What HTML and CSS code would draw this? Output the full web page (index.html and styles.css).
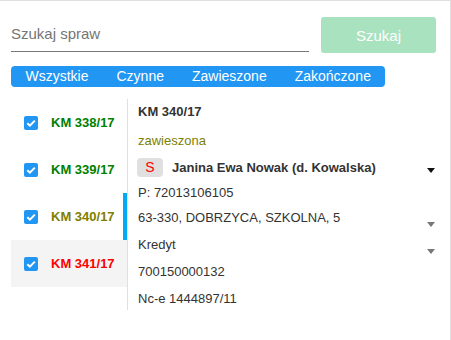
FILE: index.html
```html
<!DOCTYPE html>
<html lang="pl">
<head>
<meta charset="utf-8">
<link rel="stylesheet" href="styles.css">
</head>
<body>
<div class="frame">
  <div class="search-row">
    <div class="search-input">Szukaj spraw</div>
    <button class="search-btn">Szukaj</button>
  </div>
  <div class="tabs">
    <span class="tab">Wszystkie</span>
    <span class="tab">Czynne</span>
    <span class="tab">Zawieszone</span>
    <span class="tab">Zakończone</span>
  </div>
  <div class="main">
    <div class="list">
      <div class="item">
        <svg class="cb" width="14" height="14" viewBox="0 0 14 14"><rect width="14" height="14" rx="2" fill="#2196f3"/><path d="M3.3 7.2 L5.9 9.6 L10.8 4.6" fill="none" stroke="#fff" stroke-width="2"/></svg>
        <span class="label green">KM 338/17</span>
      </div>
      <div class="item">
        <svg class="cb" width="14" height="14" viewBox="0 0 14 14"><rect width="14" height="14" rx="2" fill="#2196f3"/><path d="M3.3 7.2 L5.9 9.6 L10.8 4.6" fill="none" stroke="#fff" stroke-width="2"/></svg>
        <span class="label green">KM 339/17</span>
      </div>
      <div class="item active">
        <svg class="cb" width="14" height="14" viewBox="0 0 14 14"><rect width="14" height="14" rx="2" fill="#2196f3"/><path d="M3.3 7.2 L5.9 9.6 L10.8 4.6" fill="none" stroke="#fff" stroke-width="2"/></svg>
        <span class="label olive">KM 340/17</span>
      </div>
      <div class="item shaded">
        <svg class="cb" width="14" height="14" viewBox="0 0 14 14"><rect width="14" height="14" rx="2" fill="#2196f3"/><path d="M3.3 7.2 L5.9 9.6 L10.8 4.6" fill="none" stroke="#fff" stroke-width="2"/></svg>
        <span class="label red">KM 341/17</span>
      </div>
    </div>
    <div class="detail">
      <div class="title">KM 340/17</div>
      <div class="status">zawieszona</div>
      <div class="row name-row">
        <span class="chip">S</span>
        <span class="name">Janina Ewa Nowak (d. Kowalska)</span>
        <span class="arrow dark"></span>
      </div>
      <div class="row p-row">P: 72013106105</div>
      <div class="row line"><span>63-330, DOBRZYCA, SZKOLNA, 5</span><span class="arrow"></span></div>
      <div class="row line"><span>Kredyt</span><span class="arrow"></span></div>
      <div class="row line"><span>700150000132</span></div>
      <div class="row line"><span>Nc-e 1444897/11</span></div>
    </div>
  </div>
</div>
</body>
</html>
```
FILE: styles.css
```css
html, body {
  margin: 0;
  padding: 0;
  background: #fff;
}
body {
  font-family: "Liberation Sans", Arial, sans-serif;
  color: #333;
}
.frame {
  width: 450px;
  height: 339px;
  border-top: 1px solid #e0e0e0;
  border-right: 1px solid #e0e0e0;
}
.search-row {
  display: flex;
  align-items: flex-start;
  gap: 12px;
  padding: 16px 14px 0 11px;
}
.search-input {
  width: 298px;
  height: 35px;
  box-sizing: border-box;
  border-bottom: 1px solid #777;
  font-size: 15px;
  color: #757575;
  line-height: 17px;
  padding-top: 8px;
}
.search-btn {
  width: 115px;
  height: 36px;
  border: none;
  border-radius: 3px;
  background: #a8e2be;
  color: #fff;
  font-family: "Liberation Sans", Arial, sans-serif;
  font-size: 15px;
  padding: 0;
}
.tabs {
  display: inline-flex;
  margin: 13px 0 0 11px;
  height: 21px;
  align-items: center;
  background: #2196f3;
  border-radius: 4px;
  padding: 0 0.5px;
}
.tab {
  color: #fff;
  font-size: 14px;
  padding: 0 14px;
  line-height: 21px;
}
.main {
  display: flex;
  margin-top: 12px;
}
.list {
  width: 116px;
  margin-left: 11px;
}
.item {
  height: 47px;
  display: flex;
  align-items: center;
  gap: 13px;
  padding-left: 13px;
  box-sizing: border-box;
}
.item.active {
  box-shadow: inset -4px 0 0 #03a9f4;
}
.item.shaded {
  background: #f4f4f4;
}
.cb {
  display: block;
  flex: none;
}
.label {
  font-size: 13px;
  font-weight: bold;
}
.green { color: #008000; }
.olive { color: #808000; }
.red { color: #ff0000; }
.detail {
  flex: 1;
  border-left: 1px solid #e0e0e0;
  padding: 0 15px 0 10px;
  font-size: 13px;
  height: 211px;
}
.title {
  font-weight: bold;
  line-height: 26px;
}
.status {
  color: #808000;
  line-height: 26px;
  padding-top: 3px;
}
.row {
  display: flex;
  align-items: center;
}
.name-row {
  height: 27px;
}
.chip {
  width: 26px;
  height: 19px;
  background: #e0e0e0;
  border-radius: 4px;
  color: #ff0000;
  font-size: 14px;
  line-height: 19px;
  text-align: center;
  margin-left: -1px;
  margin-right: 9px;
}
.name {
  font-weight: bold;
  flex: 1;
}
.p-row {
  height: 23px;
}
.line {
  height: 27px;
}
.line span:first-child {
  flex: 1;
}
.arrow {
  width: 0;
  height: 0;
  border-left: 4px solid transparent;
  border-right: 4px solid transparent;
  border-top: 5px solid #777;
  margin-top: 13px;
}
.arrow.dark {
  border-top-color: #111;
  margin-top: 5px;
}
```
